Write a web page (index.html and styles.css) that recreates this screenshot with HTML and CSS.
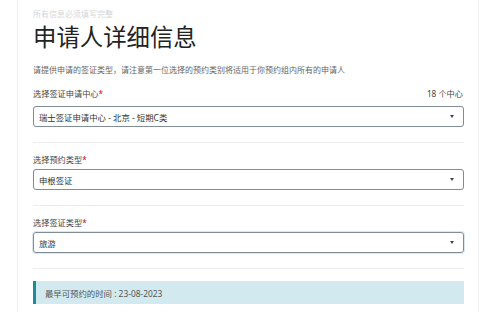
FILE: index.html
```html
<!DOCTYPE html>
<html lang="zh-CN">
<head>
  <meta charset="UTF-8" />
  <meta name="viewport" content="width=device-width, initial-scale=1.0"/>
  <title>申请人详细信息</title>
  <link rel="stylesheet" href="styles.css">
</head>
<body>
  <div class="page">
    <div class="note">所有信息必须填写完整</div>
    <h1 class="title">申请人详细信息</h1>
    <p class="intro">请提供申请的签证类型，请注意第一位选择的预约类别将适用于你预约组内所有的申请人</p>

    <div class="field first">
      <div class="field-head">
        <label>选择签证申请中心<span class="req">*</span></label>
        <span class="count">18 个中心</span>
      </div>
      <div class="select">
        <span>瑞士签证申请中心 - 北京 - 短期C类</span>
        <i class="caret"></i>
      </div>
    </div>

    <div class="field">
      <div class="field-head">
        <label>选择预约类型<span class="req">*</span></label>
      </div>
      <div class="select">
        <span>申根签证</span>
        <i class="caret"></i>
      </div>
    </div>

    <div class="field">
      <div class="field-head">
        <label>选择签证类型<span class="req">*</span></label>
      </div>
      <div class="select focused">
        <span>旅游</span>
        <i class="caret"></i>
      </div>
    </div>

    <div class="info">最早可预约的时间 : 23-08-2023</div>
  </div>
</body>
</html>
```

FILE: styles.css
```css
body {
  margin: 0;
  background: #fff;
  font-family: "Noto Sans", "Noto Sans CJK SC", sans-serif;
  color: #333;
}

.page {
  margin-left: 17px;
  width: 431px;
  min-height: 312px;
  padding: 8px 14px 0 15px;
  border-left: 1px solid #eeeeee;
  border-right: 1px solid #f2f2f2;
}

.note {
  font-size: 8px;
  line-height: 12px;
  color: #d6d6d6;
}

.title {
  margin: 2px 0 0;
  font-size: 23.4px;
  line-height: 30px;
  font-weight: 400;
  color: #222;
}

.intro {
  margin: 12px 0 0;
  font-size: 8px;
  line-height: 12px;
  color: #666;
}

.field {
  padding: 11px 0 15px;
  border-bottom: 1px solid #ececec;
}

.field.first {
  padding-top: 12px;
}

.field-head {
  display: flex;
  justify-content: space-between;
  font-size: 8.2px;
  line-height: 12px;
  color: #444;
  margin-bottom: 3px;
}

.field.first .field-head {
  margin-bottom: 6px;
}

.req {
  color: #c0102a;
}

.count {
  margin-right: 1px;
}

.select {
  display: flex;
  justify-content: space-between;
  align-items: center;
  height: 21px;
  box-sizing: border-box;
  padding: 0 9px 0 5px;
  border: 1px solid #808c97;
  border-radius: 3px;
  font-size: 8.4px;
  color: #333;
}

.select.focused {
  box-shadow: 0 0 0 1px #dbe6ef;
}

.caret {
  width: 0;
  height: 0;
  border-left: 2.5px solid transparent;
  border-right: 2.5px solid transparent;
  border-top: 3px solid #444;
}

.info {
  margin-top: 12px;
  height: 23px;
  box-sizing: border-box;
  padding-left: 9px;
  display: flex;
  align-items: center;
  background: #d2eaef;
  border-left: 3px solid #1b8c9c;
  font-size: 8.4px;
  color: #555;
}
```
